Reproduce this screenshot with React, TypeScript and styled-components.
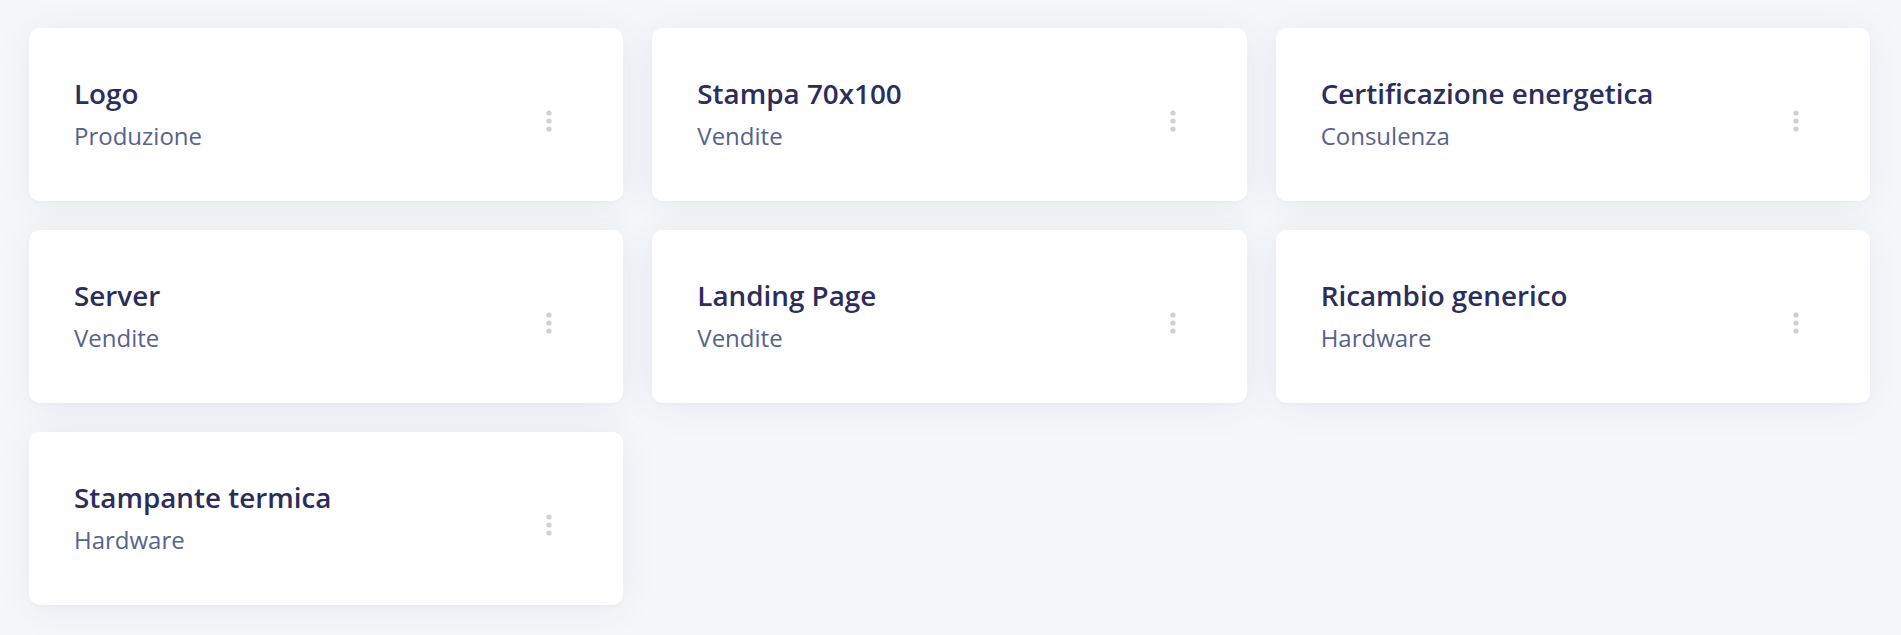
import React from "react";
import styled, { createGlobalStyle } from "styled-components";

const GlobalStyle = createGlobalStyle`
  html, body {
    margin: 0;
    padding: 0;
    background: #f5f7fa;
  }
  body {
    font-family: "Open Sans", "Noto Sans", "Liberation Sans", sans-serif;
  }
  * { box-sizing: border-box; }
`;

const Page = styled.div`
  display: grid;
  grid-template-columns: repeat(3, 1fr);
  column-gap: 29px;
  row-gap: 29px;
  padding: 28px 31px 30px 29px;
  min-height: 635px;
  align-content: start;
`;

const Card = styled.div`
  display: flex;
  align-items: center;
  justify-content: space-between;
  height: 173px;
  padding: 0 62px 4px 45px;
  background: #ffffff;
  border-radius: 10px;
  box-shadow: 0 4px 36px rgba(50, 70, 120, 0.08), 0 1px 3px rgba(50, 70, 120, 0.03);
`;

const TextBlock = styled.div`
  display: flex;
  flex-direction: column;
  gap: 7px;
  min-width: 0;
`;

const Title = styled.div`
  font-size: 27.8px;
  font-weight: 600;
  color: #2b2d5b;
  line-height: 38px;
  white-space: nowrap;
`;

const Subtitle = styled.div`
  font-size: 24px;
  font-weight: 400;
  color: #56638b;
  line-height: 33px;
  white-space: nowrap;
`;

const MenuButton = styled.button`
  display: flex;
  align-items: center;
  justify-content: center;
  width: 24px;
  height: 28px;
  margin-top: 16px;
  padding: 0;
  border: none;
  background: transparent;
  cursor: pointer;
`;

const DotsIcon = () => (
  <svg width="6" height="22" viewBox="0 0 6 22" aria-hidden="true">
    <circle cx="3" cy="3" r="2.6" fill="#ccd0d8" />
    <circle cx="3" cy="11" r="2.6" fill="#ccd0d8" />
    <circle cx="3" cy="19" r="2.6" fill="#ccd0d8" />
  </svg>
);

const items = [
  { title: "Logo", sub: "Produzione" },
  { title: "Stampa 70x100", sub: "Vendite" },
  { title: "Certificazione energetica", sub: "Consulenza" },
  { title: "Server", sub: "Vendite" },
  { title: "Landing Page", sub: "Vendite" },
  { title: "Ricambio generico", sub: "Hardware" },
  { title: "Stampante termica", sub: "Hardware" },
];

export default function App() {
  return (
    <>
      <GlobalStyle />
      <Page>
        {items.map((it) => (
          <Card key={it.title}>
            <TextBlock>
              <Title>{it.title}</Title>
              <Subtitle>{it.sub}</Subtitle>
            </TextBlock>
            <MenuButton aria-label="Menu">
              <DotsIcon />
            </MenuButton>
          </Card>
        ))}
      </Page>
    </>
  );
}
